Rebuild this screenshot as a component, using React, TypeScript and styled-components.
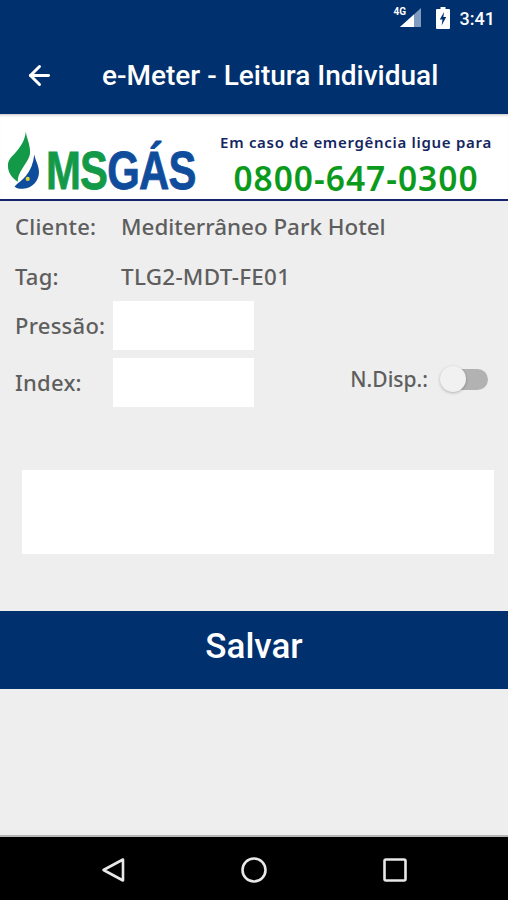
import React from 'react'
import styled, { createGlobalStyle } from 'styled-components'
import { ArrowLeft } from 'lucide-react'

const NAVY = '#00306e'

const GlobalStyle = createGlobalStyle`
  html, body {
    margin: 0;
    padding: 0;
    background: #eeeeee;
  }
  * {
    box-sizing: border-box;
  }
`

const App = () => (
  <Screen>
    <GlobalStyle />
    <Header>
      <StatusBar>
        <NetworkIcon />
        <BatteryIcon />
        <Clock>3:41</Clock>
      </StatusBar>
      <AppBar>
        <BackButton>
          <ArrowLeft size={31} strokeWidth={2.3} color="#fff" />
        </BackButton>
        <Title>e-Meter - Leitura Individual</Title>
      </AppBar>
    </Header>

    <Banner>
      <LogoIcon />
      <LogoText>
        <Ms>MS</Ms>
        <Gas>GÁS</Gas>
      </LogoText>
      <Emergency>
        <EmergencyText>Em caso de emergência ligue para</EmergencyText>
        <Phone>0800-647-0300</Phone>
      </Emergency>
    </Banner>

    <Form>
      <InfoRow>
        <Label>Cliente:</Label>
        <Value>Mediterrâneo Park Hotel</Value>
      </InfoRow>
      <InfoRow>
        <Label>Tag:</Label>
        <Value $tracking={0.3}>TLG2-MDT-FE01</Value>
      </InfoRow>
      <InputRow>
        <InputLabel>Pressão:</InputLabel>
        <Field />
      </InputRow>
      <InputRow>
        <InputLabel>Index:</InputLabel>
        <Field />
        <Toggle>
          <ToggleLabel>N.Disp.:</ToggleLabel>
          <Switch>
            <Thumb />
          </Switch>
        </Toggle>
      </InputRow>
      <Notes />
    </Form>

    <SaveButton>Salvar</SaveButton>
    <Spacer />

    <NavBar>
      <NavIcon viewBox="0 0 28 28">
        <path d="M24 3.5 L4.5 14 L24 24.5 Z" />
      </NavIcon>
      <NavIcon viewBox="0 0 28 28">
        <circle cx="14" cy="14" r="11.5" />
      </NavIcon>
      <NavIcon viewBox="0 0 28 28">
        <rect x="3.5" y="3.5" width="21" height="21" rx="1.5" />
      </NavIcon>
    </NavBar>
  </Screen>
)

const NetworkIcon = () => (
  <NetworkWrap>
    <svg width="28" height="24" viewBox="0 0 28 24">
      <path d="M3 21 L24 2 V21 Z" fill="#7f9bbd" />
      <path d="M3 21 L17 8.4 V21 Z" fill="#fff" />
    </svg>
    <NetworkType>4G</NetworkType>
  </NetworkWrap>
)

const BatteryIcon = () => (
  <svg width="14" height="22" viewBox="0 0 14 22">
    <path d="M4.5 0 H9.5 V2 H13 Q14 2 14 3 V21 Q14 22 13 22 H1 Q0 22 0 21 V3 Q0 2 1 2 H4.5 Z" fill="#fff" />
    <path d="M8 5 L3.8 12.4 H6.5 L5.6 18.5 L10.2 10 H7.4 Z" fill={NAVY} />
  </svg>
)

const LogoIcon = () => (
  <LogoSvg width="32" height="60" viewBox="0 0 34 62">
    <path
      d="M20 0 C21 7 24 12 24.5 20 C25 27 21 31 17 38 C13 44 11 49 11.5 53 C5 49 1 43 1 36 C1 29 6 26 10 21 C15 15 19 9 20 0 Z"
      fill="#129a48"
    />
    <path
      d="M29 24 C30 30 34 36 34 43 C34 52 27 60 17 60.5 C13 60.5 10 60 8 58 C12 54 16 52 20 47 C25 41 28 33 29 24 Z"
      fill="#0f4d9c"
    />
    <circle cx="22" cy="50" r="2.2" fill="#e4d53a" />
  </LogoSvg>
)

const Screen = styled.div`
  display: flex;
  flex-direction: column;
  width: 508px;
  height: 900px;
  overflow: hidden;
  background: #eeeeee;
  font-family: 'Noto Sans', sans-serif;
`

const Header = styled.header`
  height: 114px;
  flex-shrink: 0;
  background: ${NAVY};
`

const StatusBar = styled.div`
  display: flex;
  align-items: center;
  justify-content: flex-end;
  height: 36px;
  padding-right: 13px;
`

const NetworkWrap = styled.div`
  position: relative;
  display: flex;
  width: 28px;
  height: 24px;
  margin-right: 11px;
`

const NetworkType = styled.span`
  position: absolute;
  top: 0;
  left: -3px;
  color: #fff;
  font-family: 'Roboto', sans-serif;
  font-size: 10px;
  font-weight: 700;
  line-height: 11px;
`

const Clock = styled.span`
  margin-left: 10px;
  color: #fff;
  font-family: 'Roboto', sans-serif;
  font-size: 18px;
  font-weight: 500;
`

const AppBar = styled.div`
  display: flex;
  align-items: center;
  height: 77px;
  padding: 2px 0 0 24px;
`

const BackButton = styled.div`
  display: flex;
  width: 78px;
`

const Title = styled.h1`
  margin: 0;
  color: #fff;
  font-family: 'Roboto', sans-serif;
  font-size: 28px;
  font-weight: 500;
  white-space: nowrap;
`

const Banner = styled.div`
  display: flex;
  align-items: flex-end;
  height: 87px;
  flex-shrink: 0;
  padding: 0 0 9px 7px;
  background: #fff;
  border-bottom: 2px solid #15246b;
  box-shadow: inset 0 3px 3px -2px rgba(0, 0, 0, 0.25);
`

const LogoSvg = styled.svg`
  margin-bottom: -1px;
`

const LogoText = styled.div`
  display: flex;
  width: 150px;
  margin: 0 0 -3px 7px;
  font-family: 'Liberation Sans', sans-serif;
  font-size: 53px;
  font-weight: 700;
  line-height: 44px;
  letter-spacing: -1px;
  -webkit-text-stroke: 0.8px currentColor;
  transform: scaleX(0.79);
  transform-origin: left bottom;
`

const Ms = styled.span`
  color: #129a48;
`

const Gas = styled.span`
  color: #0f4d9c;
`

const Emergency = styled.div`
  display: flex;
  flex-direction: column;
  align-items: center;
  width: 272px;
  margin-left: 24px;
`

const EmergencyText = styled.span`
  color: #14265f;
  font-family: 'Noto Sans', sans-serif;
  font-size: 15px;
  font-weight: 600;
  letter-spacing: 0.7px;
  white-space: nowrap;
`

const Phone = styled.span`
  margin-top: 7px;
  margin-bottom: -7px;
  color: #0b9a1c;
  font-family: 'Noto Sans', sans-serif;
  font-size: 33.5px;
  font-weight: 600;
  line-height: 38px;
  letter-spacing: 1px;
  white-space: nowrap;
`

const Form = styled.div`
  display: flex;
  flex-direction: column;
  flex-shrink: 0;
  padding: 0 14px 0 15px;
`

const InfoRow = styled.div`
  display: flex;
  align-items: center;
  height: 50px;
`

const Label = styled.span`
  width: 106px;
  color: #5e5e5e;
  font-size: 22px;
  font-weight: 500;
  letter-spacing: 0.25px;
`

const Value = styled.span<{ $tracking?: number }>`
  color: #5e5e5e;
  font-size: 22.4px;
  font-weight: 500;
  letter-spacing: ${({ $tracking }) => $tracking ?? 0}px;
`

const InputRow = styled.div`
  display: flex;
  align-items: center;
  margin-bottom: 8px;
`

const InputLabel = styled(Label)`
  width: 98px;
  padding-bottom: 2px;
`

const Field = styled.div`
  width: 141px;
  height: 49px;
  background: #fff;
`

const Toggle = styled.div`
  display: flex;
  align-items: center;
  margin-left: auto;
  margin-top: -7px;
  margin-right: 6px;
`

const ToggleLabel = styled(Label)`
  width: auto;
  font-size: 21px;
  letter-spacing: 0;
`

const Switch = styled.div`
  position: relative;
  width: 44px;
  height: 21px;
  margin-left: 16px;
  border-radius: 11px;
  background: #b2b2b2;
`

const Thumb = styled.span`
  position: absolute;
  top: -3px;
  left: -4px;
  width: 26px;
  height: 26px;
  border-radius: 50%;
  background: #f1f1f1;
  box-shadow: 0 1px 3px rgba(0, 0, 0, 0.25);
`

const Notes = styled.div`
  width: 472px;
  height: 84px;
  margin: 55px 0 0 7px;
  background: #fff;
`

const SaveButton = styled.button`
  height: 78px;
  flex-shrink: 0;
  margin-top: 57px;
  padding: 0 0 8px;
  border: 0;
  background: ${NAVY};
  color: #fff;
  font-family: 'Roboto', sans-serif;
  font-size: 35px;
  font-weight: 500;
`

const Spacer = styled.div`
  flex: 1;
  border-bottom: 2px solid #b5b5b5;
`

const NavBar = styled.nav`
  display: flex;
  align-items: center;
  justify-content: center;
  gap: 113px;
  height: 63px;
  flex-shrink: 0;
  padding-top: 2px;
  background: #000;
`

const NavIcon = styled.svg`
  width: 28px;
  height: 28px;
  fill: none;
  stroke: #e8e8e8;
  stroke-width: 2.6;
  stroke-linejoin: round;
`

export default App
